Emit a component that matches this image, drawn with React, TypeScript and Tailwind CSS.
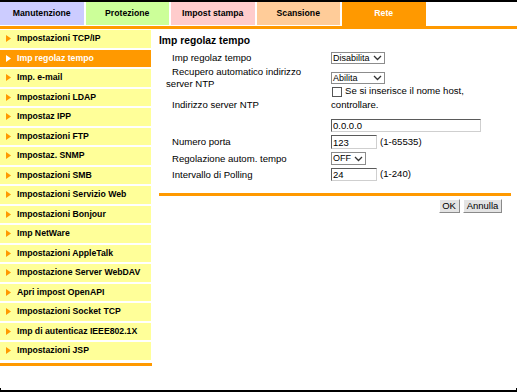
import React from "react";

const TABS = [
  { label: "Manutenzione", bg: "bg-[#ccccff]" },
  { label: "Protezione", bg: "bg-[#ccff99]" },
  { label: "Impost stampa", bg: "bg-[#ffcccc]" },
  { label: "Scansione", bg: "bg-[#ffcc99]" },
];

const MENU = [
  "Impostazioni TCP/IP",
  "Imp regolaz tempo",
  "Imp. e-mail",
  "Impostazioni LDAP",
  "Impostaz IPP",
  "Impostazioni FTP",
  "Impostaz. SNMP",
  "Impostazioni SMB",
  "Impostazioni Servizio Web",
  "Impostazioni Bonjour",
  "Imp NetWare",
  "Impostazioni AppleTalk",
  "Impostazione Server WebDAV",
  "Apri impost OpenAPI",
  "Impostazioni Socket TCP",
  "Imp di autenticaz IEEE802.1X",
  "Impostazioni JSP",
];

const ACTIVE = "Imp regolaz tempo";

function Arrow({ color }: { color: string }) {
  return (
    <svg width="5" height="7" viewBox="0 0 5 7" className="shrink-0">
      <polygon points="0,0 5,3.5 0,7" fill={color} />
    </svg>
  );
}

function Chevron() {
  return (
    <svg width="9" height="6" viewBox="0 0 9 6" className="shrink-0">
      <polyline points="1,1 4.5,4.5 8,1" fill="none" stroke="#333" strokeWidth="1.3" />
    </svg>
  );
}

function SelectBox({ value, className }: { value: string; className: string }) {
  return (
    <div
      className={`${className} flex items-center justify-between border border-[#8c8c8c] bg-white pl-[1px] pr-[2px] text-[9px] leading-none text-black`}
    >
      <span>{value}</span>
      <Chevron />
    </div>
  );
}

function TextBox({ value, className }: { value: string; className: string }) {
  return (
    <input
      readOnly
      value={value}
      className={`${className} border border-t-[#5a5a5a] border-l-[#5a5a5a] border-b-[#cfcfcf] border-r-[#cfcfcf] bg-white px-[1px] text-[9.5px] leading-none text-black outline-none`}
    />
  );
}

export default function App() {
  return (
    <div className="flex h-[392px] w-[517px] flex-col overflow-hidden bg-white font-['Liberation_Sans',Arial,sans-serif] text-black">
      {/* top frame */}
      <div className="h-[2px] w-full bg-black" />

      {/* Tabs */}
      <div className="flex h-[24px] items-start gap-[2px]">
        {TABS.map((t) => (
          <div
            key={t.label}
            className={`${t.bg} flex h-[23px] w-[83.5px] items-center justify-center text-[8.7px] font-bold`}
          >
            {t.label}
          </div>
        ))}
        <div className="flex h-[24px] w-[83.5px] items-center justify-center bg-[#ff9900] text-[8.7px] font-bold text-white">
          Rete
        </div>
      </div>
      <div className="h-[3px] w-full bg-[#ff9900]" />

      <div className="flex flex-1">
        {/* Sidebar */}
        <div className="flex w-[152px] flex-col pt-[1px]">
          <div className="flex flex-col gap-[2px]">
            {MENU.map((m) => {
              const active = m === ACTIVE;
              return (
                <div
                  key={m}
                  className={`flex h-[17.5px] w-[151px] items-center gap-[6px] pl-[6px] text-[8.7px] font-bold ${
                    active ? "bg-[#ff9900] text-white" : "bg-[#ffff99] text-black"
                  }`}
                >
                  <Arrow color={active ? "#ffffff" : "#ff9900"} />
                  <span className="whitespace-nowrap">{m}</span>
                </div>
              );
            })}
          </div>
          <div className="mt-[3.5px] h-[3px] w-full bg-[#ff9900]" />
        </div>

        {/* Main */}
        <div className="flex flex-1 flex-col pl-[7px] text-[9.6px]">
          <div className="mt-[6px] h-[12px] text-[10.3px] font-bold leading-[12px]">Imp regolaz tempo</div>

          <div className="flex flex-col pl-[7px]">
            {/* Row 1 */}
            <div className="mt-[5px] flex h-[12px] items-center">
              <div className="w-[165px] indent-[6px] leading-[12px]">Imp regolaz tempo</div>
              <SelectBox value="Disabilita" className="h-[12px] w-[54px]" />
            </div>

            {/* Row 2 */}
            <div className="mt-[8px] flex h-[12px] items-center">
              <div className="w-[165px] indent-[6px] leading-[11.6px]">
                Recupero automatico indirizzo
                <br />
                server NTP
              </div>
              <SelectBox value="Abilita" className="h-[12px] w-[54px]" />
            </div>

            {/* Row 3 */}
            <div className="mt-[1px] flex items-start">
              <div className="w-[165px] pt-[14px] indent-[6px] leading-[12px]">Indirizzo server NTP</div>
              <div className="flex flex-col">
                <div className="flex h-[13px] items-center">
                  <div className="ml-[1px] h-[10px] w-[10px] border border-[#555] bg-white" />
                  <span className="ml-[3px] whitespace-nowrap">Se si inserisce il nome host,</span>
                </div>
                <div className="leading-[14px]">controllare.</div>
                <TextBox value="0.0.0.0" className="mt-[7px] h-[13px] w-[150px]" />
              </div>
            </div>

            {/* Row 4 */}
            <div className="mt-[3px] flex h-[14px] items-center">
              <div className="w-[165px] indent-[6px] leading-[12px]">Numero porta</div>
              <TextBox value="123" className="h-[14px] w-[46px]" />
              <span className="ml-[3px]">(1-65535)</span>
            </div>

            {/* Row 5 */}
            <div className="mt-[3px] flex h-[13px] items-center">
              <div className="w-[165px] indent-[6px] leading-[12px]">Regolazione autom. tempo</div>
              <SelectBox value="OFF" className="h-[13px] w-[35px]" />
            </div>

            {/* Row 6 */}
            <div className="mt-[3px] flex h-[13px] items-center">
              <div className="w-[165px] indent-[6px] leading-[12px]">Intervallo di Polling</div>
              <TextBox value="24" className="h-[13px] w-[46px]" />
              <span className="ml-[3px]">(1-240)</span>
            </div>
          </div>

          <div className="mt-[12px] h-[3px] w-[352px] bg-[#ff9900]" />

          <div className="mt-[3px] flex w-[352px] justify-end gap-[3.5px] pr-[9px]">
            <button className="flex h-[14px] w-[21px] items-center justify-center border border-t-white border-l-white border-b-[#8a8a8a] border-r-[#8a8a8a] bg-[#e4e4e4] text-[9.5px] leading-none">
              OK
            </button>
            <button className="flex h-[14px] w-[39px] items-center justify-center border border-t-white border-l-white border-b-[#8a8a8a] border-r-[#8a8a8a] bg-[#e4e4e4] text-[9.5px] leading-none">
              Annulla
            </button>
          </div>
        </div>
      </div>

      {/* bottom frame */}
      <div className="h-[4px] w-full border-x border-b-2 border-black" />
    </div>
  );
}
